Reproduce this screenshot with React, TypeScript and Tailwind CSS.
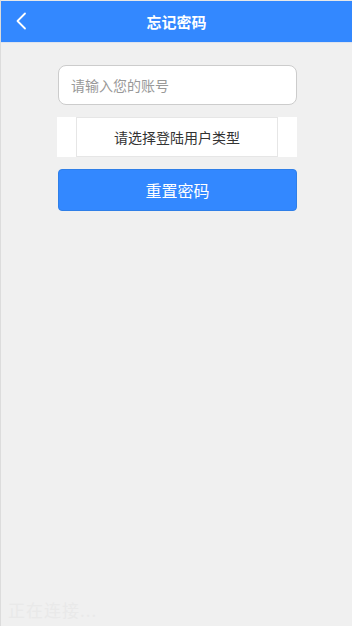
import React from 'react';

export default function App() {
  return (
    <div
      className="relative w-[352px] h-[626px] bg-[#f0f0f0] border-l border-[#dcdcdc] overflow-hidden"
      style={{ fontFamily: '"Noto Sans CJK SC", "Microsoft YaHei", sans-serif' }}
    >
      {/* Header */}
      <div className="border-t border-[#e8e8e8]">
        <div className="relative h-[41px] bg-[#3388ff] flex items-center justify-center">
          <button className="absolute left-[12px] top-[10px] w-[16px] h-[20px] flex items-center justify-center">
            <svg width="12" height="18" viewBox="0 0 12 18" fill="none">
              <path d="M10 1.5L2.5 9l7.5 7.5" stroke="#fff" strokeWidth="1.8" strokeLinecap="round" strokeLinejoin="round" />
            </svg>
          </button>
          <h1 className="text-[15px] font-bold text-white leading-none">忘记密码</h1>
        </div>
        <div className="h-px bg-[#dde3ee]" />
      </div>

      {/* Form */}
      <div className="mx-[56px] mt-[22px] flex flex-col">
        <input
          className="h-[40px] w-[239px] ml-[1px] rounded-[8px] border border-[#cccccc] bg-white px-[12px] text-[14px] text-[#333] placeholder-[#999] outline-none"
          placeholder="请输入您的账号"
        />
        <div className="mt-[12px] h-[40px] w-[240px] bg-white flex justify-center">
          <div className="w-[202px] h-[40px] border border-[#e6e6e6] flex items-center justify-center text-[14px] text-[#333]">
            请选择登陆用户类型
          </div>
        </div>
        <button className="mt-[12px] h-[42px] w-[239px] ml-[1px] rounded-[4px] bg-[#3388ff] border border-[#2f7fe8] text-white text-[16px]">
          重置密码
        </button>
      </div>

      <div className="absolute left-[7px] bottom-[4px] text-[17px] text-[#e9e9e9] tracking-[1px]">正在连接...</div>
    </div>
  );
}
